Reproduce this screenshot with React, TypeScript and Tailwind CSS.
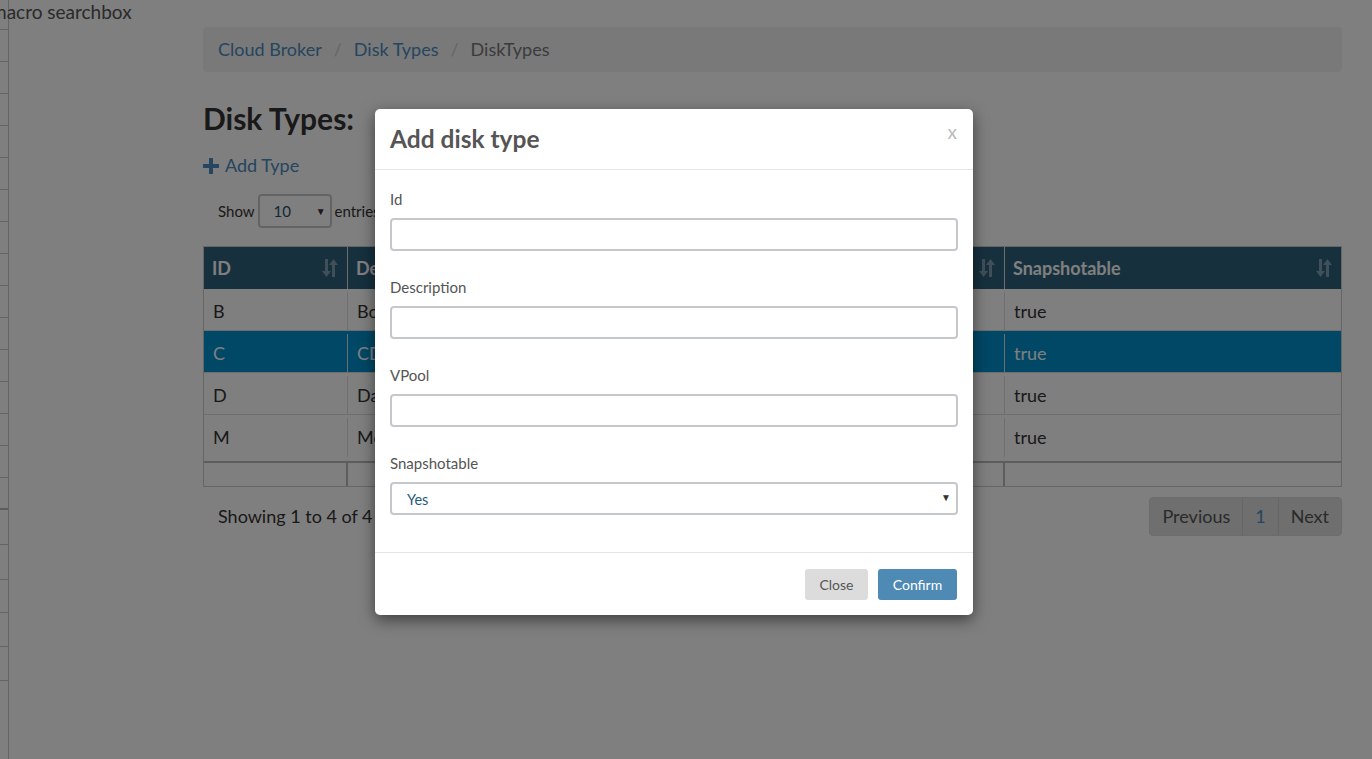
import { useState } from 'react';

// Side menu rows (only the right edge is visible)
const sideRows = [
  30, 32, 32, 32, 32, 32, 32, 32, 32, 32, 32, 32, 32, 32, 32, 32, 35, 35, 33, 34, 34,
];

const diskTypes = [
  { id: 'B', description: 'Boot', vpool: 'vmstor', snapshotable: 'true' },
  { id: 'C', description: 'CD-ROM', vpool: 'vmstor', snapshotable: 'true' },
  { id: 'D', description: 'Data', vpool: 'data', snapshotable: 'true' },
  { id: 'M', description: 'Meta', vpool: 'vmstor', snapshotable: 'true' },
];

const columns = [
  { name: 'ID', w: 'w-[144px]' },
  { name: 'Description', w: 'w-[329px]' },
  { name: 'VPool', w: 'w-[328px]' },
  { name: 'Snapshotable', w: 'flex-1' },
];

function SortIcon() {
  return (
    <svg width="18" height="20" viewBox="0 0 18 20" className="text-white/40" fill="currentColor">
      <path d="M4 1h3v12h3l-4.5 6L1 13h3z" />
      <path d="M12.5 1L17 7h-3v12h-3V7H8z" />
    </svg>
  );
}

function Field({ label, children }: { label: string; children: React.ReactNode }) {
  return (
    <div className="mb-[25px]">
      <label className="block h-[22px] text-[15px] leading-[22px] text-[#555] mb-[8px]">{label}</label>
      {children}
    </div>
  );
}

export default function App() {
  const [snap, setSnap] = useState('Yes');

  return (
    <div
      className="relative h-[759px] w-[1372px] overflow-hidden bg-white text-[#333]"
      style={{ fontFamily: 'Lato, "Open Sans", sans-serif' }}
    >
      <div className="flex h-full">
        {/* Sidebar remnant */}
        <div className="w-[9px] shrink-0 border-r border-[#c8c8c8] h-full">
          {sideRows.map((h, i) => (
            <div
              key={i}
              className={i === 15 ? 'border-b-2 border-[#bbb]' : 'border-b border-[#c8c8c8]'}
              style={{ height: h }}
            />
          ))}
        </div>

        {/* Main content */}
        <main className="ml-[194px] w-[1139px]">
          <nav className="mt-[27px] h-[45px] rounded bg-[#f3f3f3] px-[15px] flex items-center text-[18px]">
            <span className="text-[#4a8bc0]">Cloud Broker</span>
            <span className="px-[12px] text-[#ccc]">/</span>
            <span className="text-[#4a8bc0]">Disk Types</span>
            <span className="px-[12px] text-[#ccc]">/</span>
            <span className="text-[#777]">DiskTypes</span>
          </nav>

          <h2 className="mt-[28px] text-[30px] leading-[36px] font-bold text-[#333]">Disk Types:</h2>

          <div className="mt-[16px] flex items-center gap-[6px] text-[18px] text-[#4a8bc0]">
            <svg width="16" height="16" viewBox="0 0 16 16" fill="currentColor">
              <path d="M6 0h4v6h6v4h-6v6H6v-6H0V6h6z" />
            </svg>
            <span>Add Type</span>
          </div>

          <div className="mt-[15px] ml-[15px] flex items-center gap-[3px] text-[15px]">
            <span>Show</span>
            <div className="relative h-[34px] w-[74px] rounded border-2 border-[#c5c8cb] flex items-center pl-[14px] text-[#1f4f6e]">
              10
              <span className="absolute right-[4px] top-[8px] text-[10px] text-[#333]">▼</span>
            </div>
            <span>entries</span>
          </div>

          {/* Data table */}
          <div className="mt-[18px] border border-[#ccc] text-[18px]">
            <div className="flex h-[42px] bg-[#2c607c] text-white">
              {columns.map((c, i) => (
                <div
                  key={c.name}
                  className={`${c.w} ${i < 3 ? 'border-r border-[#dcdcdc]' : ''} flex items-center justify-between px-[8px] font-bold`}
                >
                  <span>{c.name}</span>
                  <SortIcon />
                </div>
              ))}
            </div>
            {diskTypes.map((d, r) => (
              <div
                key={d.id}
                className={`flex h-[42px] pt-[3px] ${r < 3 ? 'border-b border-[#ddd]' : ''} ${d.id === 'C' ? 'bg-[#0090cc] text-white' : 'bg-white'}`}
              >
                <div className="w-[144px] border-r border-[#ddd] px-[9px] flex items-center">{d.id}</div>
                <div className="w-[329px] border-r border-[#ddd] px-[9px] flex items-center">{d.description}</div>
                <div className="w-[328px] border-r border-[#ddd] px-[9px] flex items-center">{d.vpool}</div>
                <div className="flex-1 px-[9px] flex items-center">{d.snapshotable}</div>
              </div>
            ))}
            <div className="mt-[4px] flex h-[25px] border-t-2 border-[#bbb]">
              <div className="w-[144px] border-r-2 border-[#bbb]" />
              <div className="w-[329px] border-r-2 border-[#bbb]" />
              <div className="w-[328px] border-r-2 border-[#bbb]" />
              <div className="flex-1" />
            </div>
          </div>

          <div className="mt-[10px] flex items-center justify-between">
            <span className="ml-[15px] text-[18px]">Showing 1 to 4 of 4 entries</span>
            <div className="flex h-[39px] overflow-hidden rounded border border-[#d8d8d8] bg-[#dedede] text-[18px]">
              <span className="flex items-center px-[12px] text-[#555]">Previous</span>
              <span className="flex items-center border-x border-[#ccc] px-[12px] text-[#4a8bc0]">1</span>
              <span className="flex items-center px-[12px] text-[#555]">Next</span>
            </div>
          </div>
        </main>
      </div>

      <div className="absolute left-[-9px] top-0 text-[19px] leading-[24px] text-[#555]">macro searchbox</div>

      {/* Backdrop */}
      <div className="absolute inset-0 bg-black/50" />

      {/* Modal */}
      <div className="absolute left-[375px] top-[109px] w-[598px] rounded-[5px] bg-white shadow-[0_5px_15px_rgba(0,0,0,0.5)]">
        <div className="flex h-[61px] items-center justify-between border-b border-[#e5e5e5] px-[15px]">
          <h4 className="text-[24.5px] font-bold text-[#555]">Add disk type</h4>
          <span className="-mt-[14px] mr-[1px] text-[19px] text-[#bbb]">x</span>
        </div>
        <div className="px-[15px] pt-[18px] pb-[12px]">
          <Field label="Id">
            <input className="block h-[33px] w-full rounded border-2 border-[#c5c8cb] outline-none" />
          </Field>
          <Field label="Description">
            <input className="block h-[33px] w-full rounded border-2 border-[#c5c8cb] outline-none" />
          </Field>
          <Field label="VPool">
            <input className="block h-[33px] w-full rounded border-2 border-[#c5c8cb] outline-none" />
          </Field>
          <Field label="Snapshotable">
            <div className="relative">
              <select
                value={snap}
                onChange={(e) => setSnap(e.target.value)}
                className="block h-[33px] w-full appearance-none rounded border-2 border-[#c5c8cb] bg-white pl-[15px] pt-[3px] text-[14.5px] text-[#1f5a7a] outline-none"
              >
                <option>Yes</option>
                <option>No</option>
              </select>
              <span className="pointer-events-none absolute right-[7px] top-[8px] text-[10px] text-[#333]">▼</span>
            </div>
          </Field>
        </div>
        <div className="flex h-[63px] items-center justify-end gap-[10px] border-t border-[#e5e5e5] px-[16px]">
          <button className="h-[31px] w-[63px] rounded-[3px] bg-[#dcdcdc] text-[14px] text-[#555]">Close</button>
          <button className="h-[31px] w-[79px] rounded-[3px] bg-[#4f8ab5] text-[14px] text-white">Confirm</button>
        </div>
      </div>
    </div>
  );
}
